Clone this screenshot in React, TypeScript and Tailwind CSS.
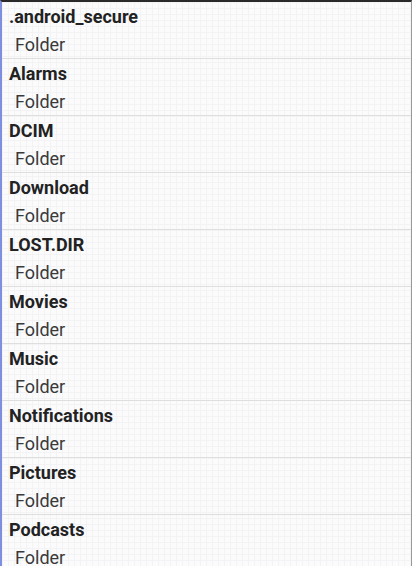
const folders = [
  '.android_secure',
  'Alarms',
  'DCIM',
  'Download',
  'LOST.DIR',
  'Movies',
  'Music',
  'Notifications',
  'Pictures',
  'Podcasts',
];

const App = () => {
  return (
    <div className="h-[566px] w-[412px] overflow-hidden border-t-2 border-t-[#2a2a2a] border-l-2 border-l-[#7f8fe0] border-r border-r-[#9a9a9a] bg-[#fbfbfc] bg-[linear-gradient(#f3f3f6_1px,transparent_1px),linear-gradient(90deg,#f3f3f6_1px,transparent_1px)] bg-[size:6px_6px] font-['Roboto',sans-serif]">
      {folders.map((name) => (
        <div key={name} className="h-[57px] border-b border-[#dedede] pl-[7px] pt-[3px]">
          <div className="text-[18px] font-bold leading-[24px] text-[#222]">{name}</div>
          <div className="mt-[4px] pl-[6px] text-[18px] leading-[24px] text-[#3a3a3a]">Folder</div>
        </div>
      ))}
    </div>
  );
};

export default App;
